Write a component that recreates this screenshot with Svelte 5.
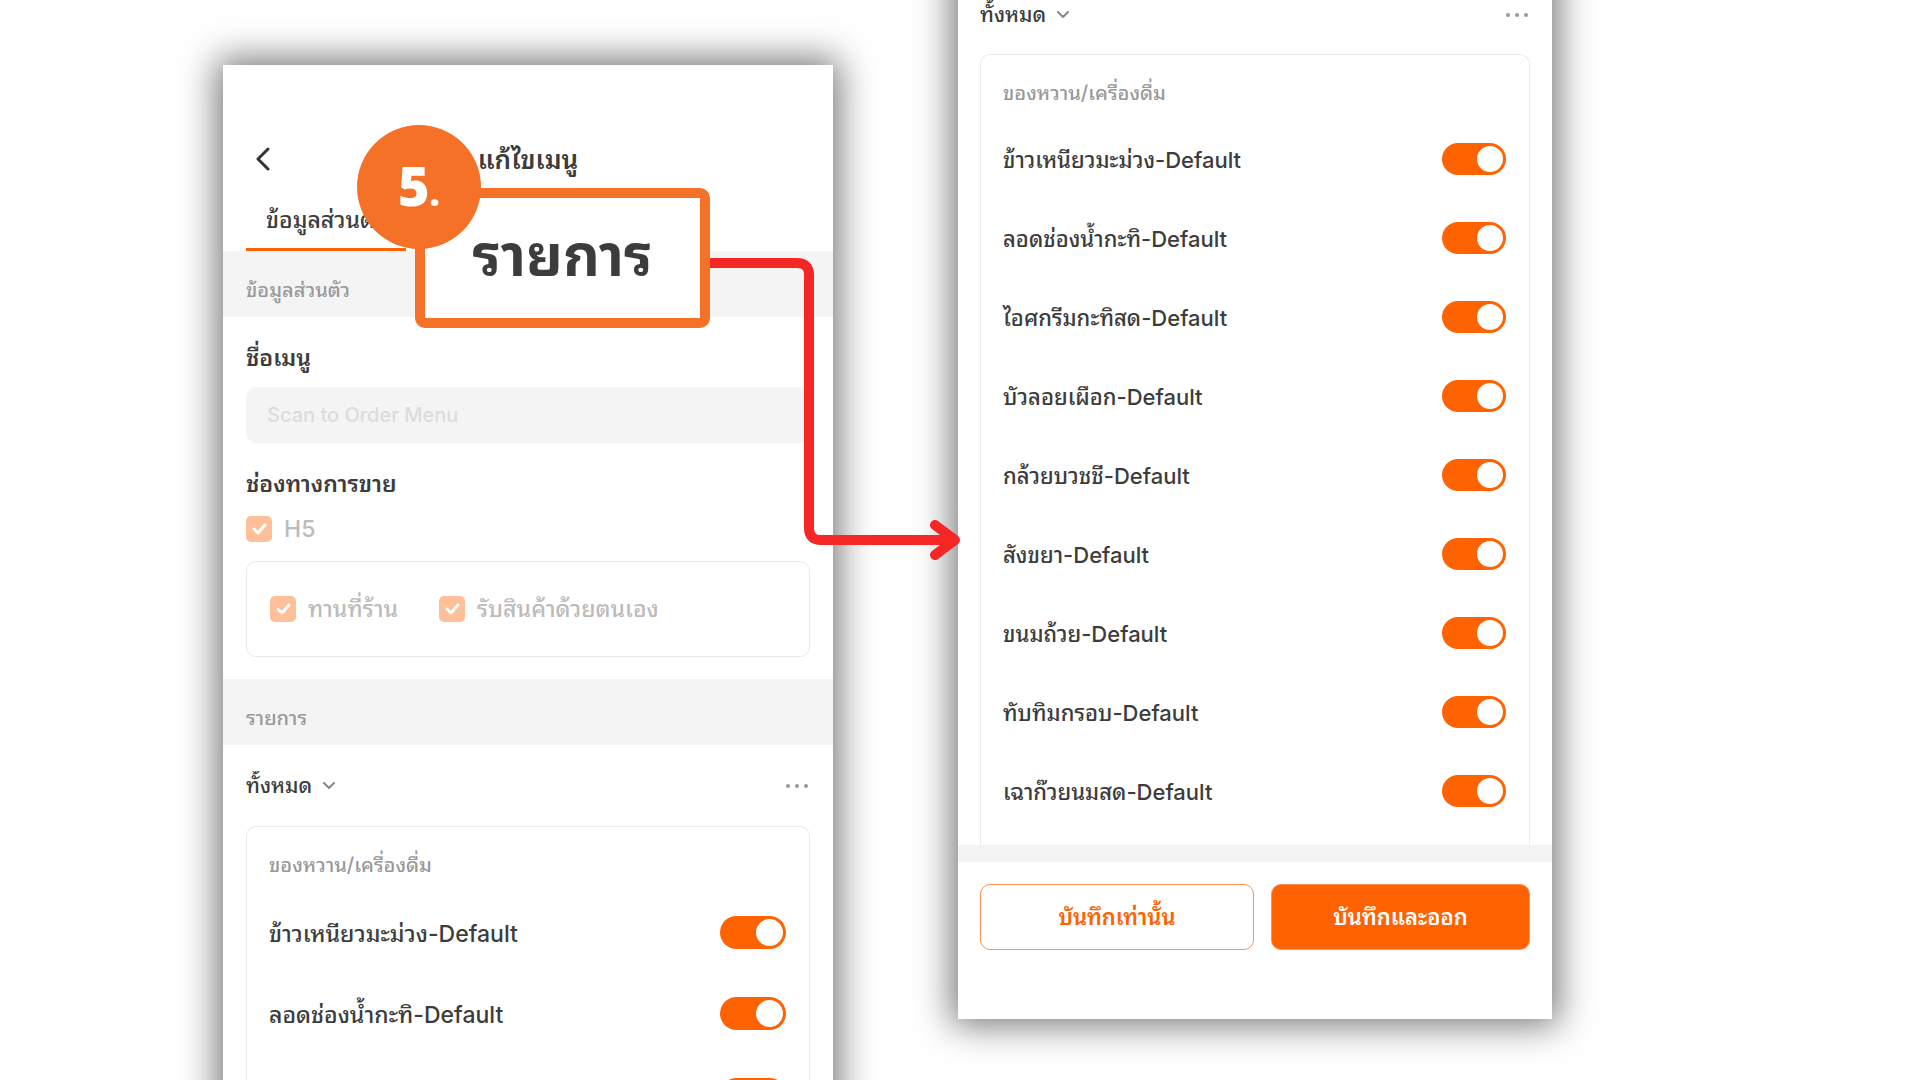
<script lang="ts">
  type Item = { name: string; on: boolean };

  const names = [
    'ข้าวเหนียวมะม่วง',
    'ลอดช่องน้ำกะทิ',
    'ไอศกรีมกะทิสด',
    'บัวลอยเผือก',
    'กล้วยบวชชี',
    'สังขยา',
    'ขนมถ้วย',
    'ทับทิมกรอบ',
    'เฉาก๊วยนมสด',
  ];

  let items: Item[] = $state(names.map((name) => ({ name: `${name}-Default`, on: true })));
</script>

{#snippet tick()}
  <svg class="tick" viewBox="0 0 26 26" aria-hidden="true">
    <path d="M8 13l4 4 7-8" />
  </svg>
{/snippet}

{#snippet menuList(list: Item[], id: string)}
  <div class="filter">
    <div class="picker">
      <select id="{id}-filter" aria-label="รายการ">
        <option>ทั้งหมด</option>
      </select>
      <svg class="chevron" viewBox="0 0 12 8" aria-hidden="true"><path d="M1 1l5 5 5-5" /></svg>
    </div>
    <button class="more" type="button" aria-label="ตัวเลือก">
      <svg viewBox="0 0 24 6" aria-hidden="true">
        <circle cx="2" cy="3" r="2" />
        <circle cx="11" cy="3" r="2" />
        <circle cx="20" cy="3" r="2" />
      </svg>
    </button>
  </div>
  <div class="card">
    <h3>ของหวาน/เครื่องดื่ม</h3>
    <ul>
      {#each list as item, i (item.name)}
        <li>
          <label for="{id}-{i}">{item.name}</label>
          <input id="{id}-{i}" class="switch" type="checkbox" role="switch" bind:checked={item.on} />
        </li>
      {/each}
    </ul>
  </div>
{/snippet}

<main>
  <section class="phone first">
    <header>
      <button class="back" type="button" aria-label="ย้อนกลับ">
        <svg viewBox="0 0 16 26" aria-hidden="true"><path d="M14 3L4 13l10 10" /></svg>
      </button>
      <h1>แก้ไขเมนู</h1>
    </header>
    <nav>
      <a href="#info">ข้อมูลส่วนตัว</a>
    </nav>
    <h2 class="band" id="info">ข้อมูลส่วนตัว</h2>
    <div class="form">
      <label class="caption" for="menu-name">ชื่อเมนู</label>
      <input id="menu-name" class="field" type="text" value="Scan to Order Menu" disabled />
      <p class="caption channels">ช่องทางการขาย</p>
      <label class="check"><input type="checkbox" checked disabled />{@render tick()}H5</label>
      <div class="options">
        <label class="check"><input type="checkbox" checked disabled />{@render tick()}ทานที่ร้าน</label>
        <label class="check"><input type="checkbox" checked disabled />{@render tick()}รับสินค้าด้วยตนเอง</label>
      </div>
    </div>
    <h2 class="band">รายการ</h2>
    {@render menuList(items.slice(0, 3), 'a')}

    <svg class="arrow" viewBox="0 0 260 300" aria-hidden="true">
      <path d="M0 13h92q12 0 12 12v253q0 12 12 12h132M230 275l20 15-20 15" />
    </svg>
    <div class="callout">รายการ</div>
    <div class="step"><span>5</span><span class="dot">.</span></div>
  </section>

  <section class="phone second">
    {@render menuList(items, 'b')}
    <footer>
      <button class="save" type="button">บันทึกเท่านั้น</button>
      <button class="save solid" type="button">บันทึกและออก</button>
    </footer>
  </section>
</main>

<style>
  :global(body) {
    background: #fff;
  }

  main {
    display: grid;
    grid-template-columns: 223fr 610fr 125fr 594fr 368fr;
    align-items: start;
    height: 100vh;
    overflow: hidden;
    color: #3c3c3c;
    font-family: Inter, 'Noto Sans Thai Looped', Loma, Garuda, Waree, 'Noto Sans Thai', sans-serif;
    font-size: 22px;
    font-weight: 500;
    line-height: 30px;
  }

  h1,
  h2,
  h3,
  p,
  ul {
    margin: 0;
    padding: 0;
    font-weight: inherit;
  }

  button,
  input,
  select {
    margin: 0;
    padding: 0;
    border: 0;
    background: none;
    color: inherit;
    font: inherit;
  }

  svg {
    display: block;
    fill: none;
    stroke-linecap: round;
    stroke-linejoin: round;
  }

  .phone {
    position: relative;
    background: #fff;
    box-shadow: 0 0 34px 6px rgba(0, 0, 0, 0.54);
  }

  .first {
    --row: 81px;
    --pad: 23px;
    --head: 65px;
    --switch: 66px;
    grid-column: 2;
    margin-top: 65px;
    font-size: 23px;
    z-index: 1;
  }

  .second {
    --row: 79px;
    --pad: 22px;
    --head: 64px;
    --switch: 64px;
    grid-column: 4;
    margin-top: -64px;
    padding-top: 39px;
  }

  header {
    display: grid;
    grid-template-columns: 48px 1fr 48px;
    align-items: center;
    height: 60px;
    padding: 64px var(--pad) 0;
  }

  .back svg {
    width: 16px;
    height: 26px;
    margin-left: 8px;
    stroke: #333;
    stroke-width: 3;
  }

  h1 {
    padding-top: 2px;
    text-align: center;
    font-size: 26px;
    font-weight: 600;
  }

  nav {
    display: flex;
    height: 62px;
    padding: 0 var(--pad);
  }

  nav a {
    padding: 0 20px;
    border-bottom: 3px solid #ff6200;
    color: inherit;
    line-height: 62px;
    text-decoration: none;
  }

  .band {
    height: 66px;
    padding: 0 var(--pad);
    background: #f4f4f4;
    color: #999;
    font-size: 20px;
    line-height: 78px;
  }

  .form {
    padding: 23px var(--pad) 22px;
  }

  .caption {
    display: block;
    line-height: 36px;
    font-weight: 600;
  }

  .field {
    box-sizing: border-box;
    width: 100%;
    height: 56px;
    margin-top: 11px;
    padding: 0 21px;
    border-radius: 10px;
    background: #f4f4f4;
    color: #dcdcdc;
    font-size: 20px;
  }

  .channels {
    margin: 23px 0 14px;
  }

  .check {
    position: relative;
    display: flex;
    align-items: center;
    gap: 12px;
    height: 26px;
    color: #bbb;
  }

  .check input {
    appearance: none;
    width: 26px;
    height: 26px;
    border-radius: 5px;
    background: #ffbf99;
  }

  .tick {
    position: absolute;
    left: 0;
    top: 0;
    width: 26px;
    height: 26px;
    stroke: #fff;
    stroke-width: 3;
  }

  .options {
    display: flex;
    align-items: center;
    gap: 41px;
    height: 94px;
    margin-top: 19px;
    padding: 0 23px;
    border: 1px solid #e8e8e8;
    border-radius: 10px;
  }

  .filter {
    display: flex;
    align-items: center;
    justify-content: space-between;
    height: var(--row);
    padding: 0 var(--pad);
  }

  .picker {
    display: flex;
    align-items: center;
    gap: 10px;
  }

  select {
    appearance: none;
    height: 48px;
    font-size: 21px;
  }

  .chevron {
    width: 12px;
    height: 8px;
    stroke: #888;
    stroke-width: 2;
  }

  .more svg {
    width: 24px;
    height: 6px;
    fill: #999;
  }

  .card {
    margin: 0 var(--pad);
    padding: 0 23px 0 22px;
    border: 1px solid #ebebeb;
    border-bottom: 0;
    border-radius: 10px 10px 0 0;
  }

  h3 {
    height: var(--head);
    color: #999;
    font-size: 20px;
    line-height: 76px;
  }

  ul {
    list-style: none;
  }

  li {
    display: flex;
    align-items: center;
    justify-content: space-between;
    height: var(--row);
  }

  li label {
    padding-top: 2px;
  }

  .switch {
    appearance: none;
    display: flex;
    justify-content: flex-start;
    box-sizing: border-box;
    width: var(--switch);
    height: calc(var(--switch) / 2);
    padding: 3px;
    border-radius: 17px;
    background: #ccc;
  }

  .switch:checked {
    justify-content: flex-end;
    background: #ff6200;
  }

  .switch::before {
    content: '';
    height: 100%;
    aspect-ratio: 1;
    border-radius: 50%;
    background: #fff;
  }

  .second .card {
    height: 790px;
  }

  footer {
    display: grid;
    grid-template-columns: 274fr 259fr;
    gap: 17px;
    padding: 22px var(--pad) 69px;
    border-top: 17px solid #f4f4f4;
  }

  .save {
    height: 66px;
    border: 1px solid #ff8f52;
    border-radius: 10px;
    color: #ff6200;
    font-weight: 600;
  }

  .solid {
    background: #ff6200;
    color: #fff;
  }

  .callout {
    position: absolute;
    left: 192px;
    top: 123px;
    box-sizing: border-box;
    width: 295px;
    height: 140px;
    border: 10px solid #f57128;
    border-radius: 10px;
    background: #fff;
    font-size: 57px;
    font-weight: 700;
    line-height: 116px;
    text-align: center;
  }

  .step {
    position: absolute;
    left: 134px;
    top: 60px;
    display: flex;
    align-items: baseline;
    justify-content: center;
    width: 124px;
    height: 124px;
    border-radius: 50%;
    background: #f57128;
    color: #fff;
    font-family: 'Open Sans', 'Noto Sans', sans-serif;
    font-size: 54px;
    font-weight: 800;
    line-height: 120px;
  }

  .dot {
    font-size: 36px;
  }

  .arrow {
    position: absolute;
    left: 482px;
    top: 185px;
    width: 260px;
    height: 300px;
    overflow: visible;
    stroke: #f52626;
    stroke-width: 10;
  }
</style>
